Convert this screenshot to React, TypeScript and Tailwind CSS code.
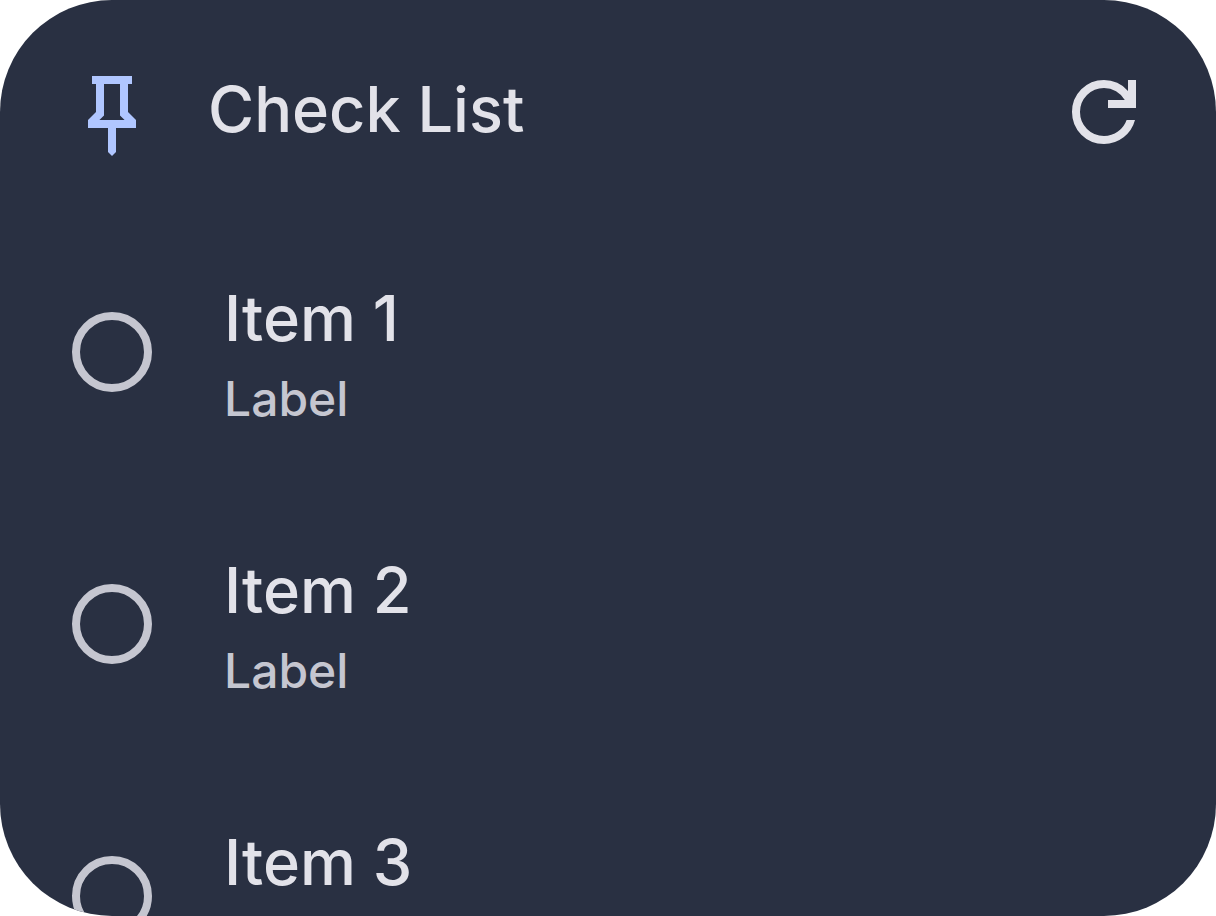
const items = [
  { id: 'item-1', title: 'Item 1', label: 'Label' },
  { id: 'item-2', title: 'Item 2', label: 'Label' },
  { id: 'item-3', title: 'Item 3', label: 'Label' },
];

function PinIcon() {
  return (
    <svg viewBox="0 -960 960 960" className="size-24 shrink-0 fill-[#b0c6ff]" aria-hidden="true">
      <path d="m640-480 80 80v80H520v240l-40 40-40-40v-240H240v-80l80-80v-280h-40v-80h400v80h-40v280Zm-286 80h252l-46-46v-314H400v314l-46 46Z" />
    </svg>
  );
}

function RefreshIcon() {
  return (
    <svg viewBox="0 -960 960 960" className="size-24 fill-[#e2e2e9]" aria-hidden="true">
      <path d="M480-160q-134 0-227-93t-93-227q0-134 93-227t227-93q69 0 132 28.5T720-690v-110h80v280H520v-80h168q-32-56-87.5-88T480-720q-100 0-170 70t-70 170q0 100 70 170t170 70q77 0 139-44t87-116h84q-28 106-114 173t-196 67Z" />
    </svg>
  );
}

export default function App() {
  return (
    <main className="flex h-screen flex-col overflow-hidden rounded-[112px] bg-[#293042] font-['Inter',sans-serif] font-medium text-[#e2e2e9]">
      <header className="flex shrink-0 items-start px-16 pt-16 pb-14">
        <PinIcon />
        <h1 className="grow pl-12 text-[63px] leading-[90px]">Check List</h1>
        <button type="button" aria-label="Refresh" className="shrink-0">
          <RefreshIcon />
        </button>
      </header>
      <ul className="flex flex-col">
        {items.map((item) => (
          <li key={item.id} className="flex h-[272px] shrink-0 items-center gap-18 px-18">
            <input
              id={item.id}
              type="checkbox"
              className="size-20 shrink-0 appearance-none rounded-full border-8 border-[#c5c6d0] checked:bg-[#b0c6ff]"
            />
            <label htmlFor={item.id} className="flex flex-col pt-1">
              <span className="text-[63px] leading-[90px]">{item.title}</span>
              <span className="text-5xl leading-[72px] text-[#c5c6d0]">{item.label}</span>
            </label>
          </li>
        ))}
      </ul>
    </main>
  );
}
